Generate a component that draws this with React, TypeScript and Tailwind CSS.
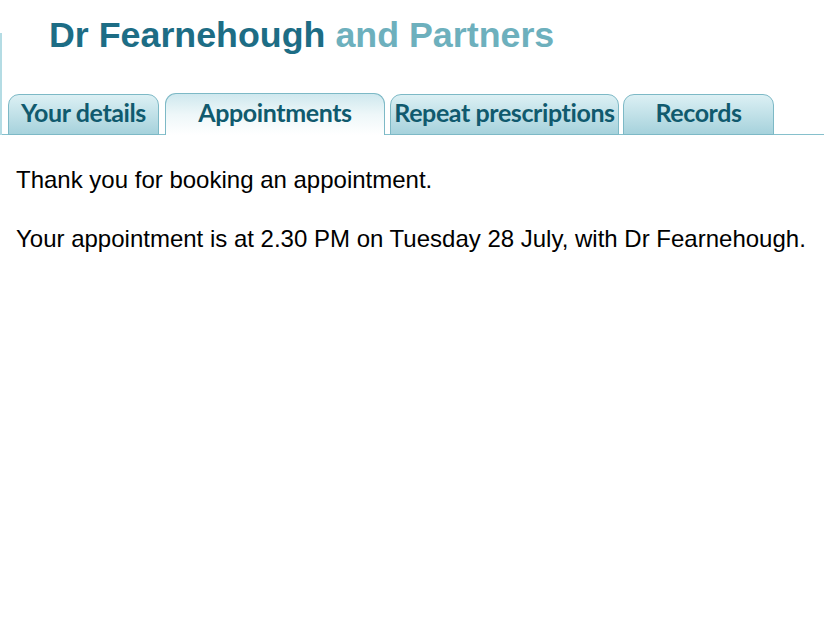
import React from "react";

const tabs = [
  { label: "Your details", w: "w-[151px]", active: false },
  { label: "Appointments", w: "w-[220px]", active: true },
  { label: "Repeat prescriptions", w: "w-[229px]", active: false },
  { label: "Records", w: "w-[151px]", active: false },
];

export default function App() {
  return (
    <div className="w-[824px] h-[618px] bg-white relative" style={{ fontFamily: '"Liberation Sans", Arial, sans-serif' }}>
      <div className="absolute left-0 top-[33px] h-[102px] w-[2px] bg-[#b4dce4]" />
      <h1 className="pl-[49px] pt-[17px] text-[35.8px] leading-[36px] font-bold text-[#1d6d85]">
        Dr Fearnehough <span className="text-[#6db0bd]">and Partners</span>
      </h1>
      <div className="mt-[41px] flex items-end h-[41px] border-b border-[#86c0cc] pl-[8px]">
        {tabs.map((t, i) => (
          <div
            key={t.label}
            className={
              (t.active
                ? "h-[42px] -mb-px bg-gradient-to-b from-[#cfe8ee] via-[#eef7f9] to-white border-b-0 "
                : "h-[41px] -mb-px bg-gradient-to-b from-[#dcf0f4] to-[#a6d2dc] ") +
              t.w +
              " border border-[#7db9c6] rounded-t-[11px] flex items-center justify-center text-[25px] font-bold text-[#105a6e] tracking-[-0.4px] " +
              (i === 0 ? "" : i === 1 ? "ml-[6px]" : i === 2 ? "ml-[5px]" : "ml-[4px]")
            }
            style={{ fontFamily: 'Lato, "Open Sans", sans-serif' }}
          >
            <span className="pb-[3px] whitespace-nowrap">{t.label}</span>
          </div>
        ))}
      </div>
      <div className="pl-[16px] pt-[31px] text-[24px] leading-[28px] text-black">
        <p>Thank you for booking an appointment.</p>
        <p className="mt-[31px]">Your appointment is at 2.30 PM on Tuesday 28 July, with Dr Fearnehough.</p>
      </div>
    </div>
  );
}
